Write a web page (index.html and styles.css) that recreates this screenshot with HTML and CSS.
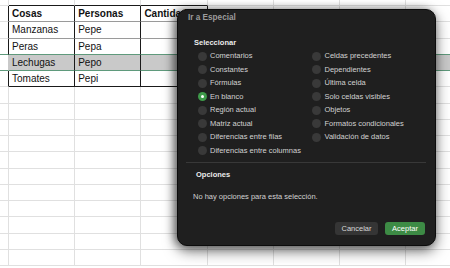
FILE: index.html
```html
<!DOCTYPE html>
<html lang="es">

<head>
    <meta charset="UTF-8">
    <meta name="viewport" content="width=device-width, initial-scale=1.0">
    <link rel="stylesheet" href="styles.css">
    <title>Ir a Especial</title>
</head>

<body>

    <div class="sheet">
        <div class="row top">
            <div class="cell gutter"></div>
            <div class="cell t"></div><div class="cell t"></div><div class="cell t"></div>
            <div class="cell"></div><div class="cell"></div><div class="cell"></div><div class="cell"></div>
        </div>
        <div class="row data">
            <div class="cell gutter"></div>
            <div class="cell t b">Cosas</div><div class="cell t b">Personas</div><div class="cell t b">Cantidad</div>
            <div class="cell"></div><div class="cell"></div><div class="cell"></div><div class="cell"></div>
        </div>
        <div class="row data">
            <div class="cell gutter"></div>
            <div class="cell t">Manzanas</div><div class="cell t">Pepe</div><div class="cell t"></div>
            <div class="cell"></div><div class="cell"></div><div class="cell"></div><div class="cell"></div>
        </div>
        <div class="row data before-sel">
            <div class="cell gutter"></div>
            <div class="cell t">Peras</div><div class="cell t">Pepa</div><div class="cell t"></div>
            <div class="cell"></div><div class="cell"></div><div class="cell"></div><div class="cell"></div>
        </div>
        <div class="row data sel">
            <div class="cell gutter"></div>
            <div class="cell t">Lechugas</div><div class="cell t">Pepo</div><div class="cell t"></div>
            <div class="cell"></div><div class="cell"></div><div class="cell"></div><div class="cell"></div>
        </div>
        <div class="row data last">
            <div class="cell gutter"></div>
            <div class="cell t">Tomates</div><div class="cell t">Pepi</div><div class="cell t"></div>
            <div class="cell"></div><div class="cell"></div><div class="cell"></div><div class="cell"></div>
        </div>
        <div id="emptyRows"></div>
    </div>

    <div class="dialog">
        <div class="dialog-title">Ir a Especial</div>
        <div class="section-title">Seleccionar</div>
        <div class="options">
            <div class="opt"><span class="radio"></span>Comentarios</div>
            <div class="opt"><span class="radio"></span>Celdas precedentes</div>
            <div class="opt"><span class="radio"></span>Constantes</div>
            <div class="opt"><span class="radio"></span>Dependientes</div>
            <div class="opt"><span class="radio"></span>Fórmulas</div>
            <div class="opt"><span class="radio"></span>Última celda</div>
            <div class="opt"><span class="radio on"></span>En blanco</div>
            <div class="opt"><span class="radio"></span>Solo celdas visibles</div>
            <div class="opt"><span class="radio"></span>Región actual</div>
            <div class="opt"><span class="radio"></span>Objetos</div>
            <div class="opt"><span class="radio"></span>Matriz actual</div>
            <div class="opt"><span class="radio"></span>Formatos condicionales</div>
            <div class="opt"><span class="radio"></span>Diferencias entre filas</div>
            <div class="opt"><span class="radio"></span>Validación de datos</div>
            <div class="opt"><span class="radio"></span>Diferencias entre columnas</div>
        </div>
        <div class="divider"></div>
        <div class="section-title opts">Opciones</div>
        <div class="note">No hay opciones para esta selección.</div>
        <div class="buttons">
            <button class="btn">Cancelar</button>
            <button class="btn primary">Aceptar</button>
        </div>
    </div>

    <script>
        // fill the rest of the sheet with empty rows
        let empty = document.getElementById("emptyRows");
        for (let i = 0; i < 11; i++) {
            let row = document.createElement("div");
            row.className = "row";
            row.innerHTML = '<div class="cell gutter"></div>' + '<div class="cell"></div>'.repeat(7);
            empty.appendChild(row);
        }
    </script>
</body>

</html>
```

FILE: styles.css
```css
* {
    padding: 0;
    margin: 0;
    box-sizing: border-box;
}

body {
    width: 450px;
    height: 268px;
    overflow: hidden;
    background-color: white;
    font-family: "Liberation Sans", Arial, sans-serif;
}

.sheet {
    width: 450px;
    height: 268px;
    overflow: hidden;
}

.row {
    display: grid;
    grid-template-columns: 9px repeat(7, 66.2px);
    height: 16.25px;
}

.row.top {
    height: 6px;
}

.cell {
    border-right: 1px solid #e0e0e0;
    border-bottom: 1px solid #e0e0e0;
    font-size: 10px;
    color: #111;
    padding-left: 3px;
    line-height: 15px;
    white-space: nowrap;
    overflow: hidden;
}

.top .t {
    border-bottom-color: #1a1a1a;
}

.data .gutter {
    border-right-color: #1a1a1a;
}

.data .t {
    border-right-color: #1a1a1a;
    border-bottom-color: #9a9a9a;
}

.last .t {
    border-bottom-color: #1a1a1a;
}

.b {
    font-weight: bold;
}

.before-sel .cell {
    border-bottom-color: #5f9a7c;
}

.sel .cell {
    background-color: #c9c9c9;
    border-bottom-color: #5f9a7c;
}

.sel .cell:not(.t) {
    border-right-color: #c9c9c9;
}

.sel .gutter {
    background-color: white;
    border-right-color: #1a1a1a;
}

.dialog {
    position: absolute;
    left: 177px;
    top: 9px;
    width: 259px;
    height: 237px;
    background-color: #1f1f1f;
    border-radius: 10px;
    border: 1px solid #0c0c0c;
    box-shadow: 0 5px 14px rgba(0, 0, 0, 0.55), -3px 0 9px rgba(0, 0, 0, 0.4);
    color: #d2d2d2;
    font-size: 7.5px;
    padding: 0 9px 0 8px;
}

.dialog-title {
    color: #9c9c9c;
    font-weight: bold;
    font-size: 8.2px;
    line-height: 10px;
    margin-top: 3px;
    padding-left: 2px;
}

.section-title {
    color: #ececec;
    font-weight: bold;
    line-height: 10px;
    margin-top: 15px;
    padding-left: 8px;
}

.options {
    display: grid;
    grid-template-columns: 114.5px 1fr;
    grid-auto-rows: 13.5px;
    margin-top: 1.25px;
    padding-left: 11.5px;
}

.opt {
    display: flex;
    align-items: center;
    line-height: 10px;
    white-space: nowrap;
}

.radio {
    width: 9px;
    height: 9px;
    border-radius: 50%;
    background-color: #393939;
    margin-right: 3.5px;
    display: flex;
    align-items: center;
    justify-content: center;
}

.radio.on {
    background-color: #3e9a4a;
}

.radio.on::after {
    content: "";
    width: 3px;
    height: 3px;
    border-radius: 50%;
    background-color: white;
}

.divider {
    height: 1px;
    background-color: #383838;
    margin-top: 4.75px;
}

.section-title.opts {
    margin-top: 7px;
    padding-left: 10px;
}

.note {
    line-height: 10px;
    margin-top: 12px;
    padding-left: 7px;
}

.buttons {
    display: flex;
    justify-content: flex-end;
    gap: 7px;
    margin-top: 20px;
    padding-right: 1px;
}

.btn {
    font-family: "Liberation Sans", Arial, sans-serif;
    font-size: 7.5px;
    height: 13px;
    border: none;
    border-radius: 3px;
    background-color: #353535;
    color: #d8d8d8;
    padding: 0 6px;
}

.btn.primary {
    background-color: #3d8b45;
    color: white;
    width: 40px;
}

.btn:not(.primary) {
    width: 43px;
}
```
